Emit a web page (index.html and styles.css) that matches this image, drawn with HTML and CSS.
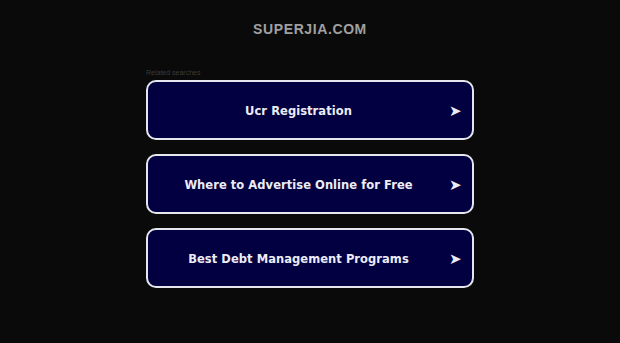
FILE: index.html
```html
<!DOCTYPE html>
<html>
<head>
<meta charset="utf-8">
<link rel="stylesheet" href="styles.css">
</head>
<body>
<header class="header">SUPERJIA.COM</header>
<main class="content">
  <div class="related">Related searches</div>
  <ul class="links">
    <li><a class="link" href="#"><span class="label">Ucr Registration</span><span class="arrow">➤</span></a></li>
    <li><a class="link" href="#"><span class="label">Where to Advertise Online for Free</span><span class="arrow">➤</span></a></li>
    <li><a class="link" href="#"><span class="label">Best Debt Management Programs</span><span class="arrow">➤</span></a></li>
  </ul>
</main>
</body>
</html>
```
FILE: styles.css
```css
html, body {
  margin: 0;
  padding: 0;
  background: #0a0a0a;
  height: 100%;
}
body {
  font-family: "Liberation Sans", Arial, sans-serif;
}
.header {
  text-align: center;
  color: #a0a0a0;
  font-size: 14px;
  font-weight: bold;
  letter-spacing: 0.6px;
  padding-top: 21px;
  height: 48px;
  box-sizing: border-box;
  line-height: 16px;
}
.content {
  width: 328px;
  margin: 0 auto;
  padding-top: 20px;
}
.related {
  font-size: 7px;
  color: #3a3a3a;
  line-height: 9px;
  margin-bottom: 3px;
}
.links {
  list-style: none;
  margin: 0;
  padding: 0;
  display: flex;
  flex-direction: column;
  gap: 14px;
}
.link {
  display: flex;
  align-items: center;
  height: 60px;
  box-sizing: border-box;
  padding: 2px 12px 0 0;
  border: 2px solid #e6e6ee;
  border-radius: 10px;
  background: #020040;
  color: #ececf6;
  text-decoration: none;
  font-family: "DejaVu Sans", sans-serif;
  font-weight: bold;
  font-size: 11.5px;
  letter-spacing: 0.05px;
}
.label {
  flex: 1;
  text-align: center;
}
.arrow {
  width: 11px;
  font-size: 15px;
  text-align: right;
  letter-spacing: 0;
}
```
